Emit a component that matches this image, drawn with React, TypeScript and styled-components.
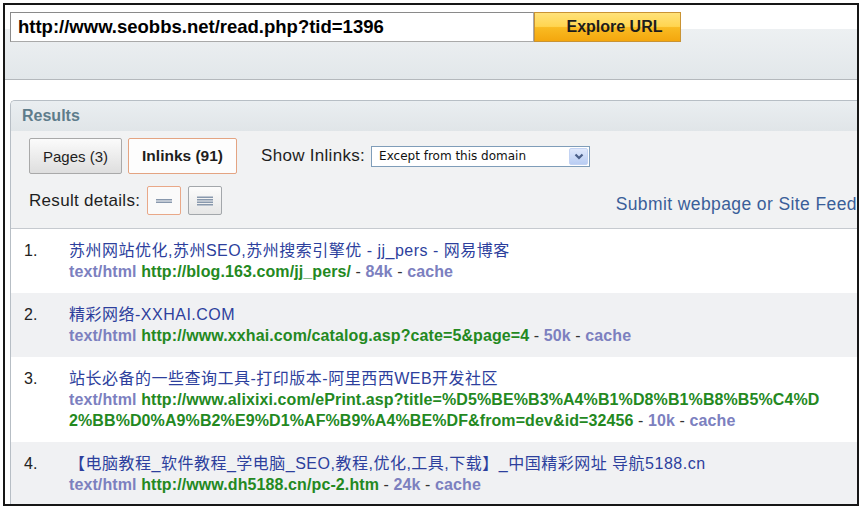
import React from "react"
import styled, { createGlobalStyle } from "styled-components"

const GlobalStyle = createGlobalStyle`
    html, body {
        margin: 0;
        padding: 0;
        background: #fff;
    }
    body {
        font-family: "Liberation Sans", Arial, "Noto Sans CJK SC", sans-serif;
    }
`

interface IResult {
    title: string
    url: string[]
    size: string
}

const results: IResult[] = [
    {
        title: '苏州网站优化,苏州SEO,苏州搜索引擎优 - jj_pers - 网易博客',
        url: ['http://blog.163.com/jj_pers/'],
        size: '84k',
    },
    {
        title: '精彩网络-XXHAI.COM',
        url: ['http://www.xxhai.com/catalog.asp?cate=5&page=4'],
        size: '50k',
    },
    {
        title: '站长必备的一些查询工具-打印版本-阿里西西WEB开发社区',
        url: [
            'http://www.alixixi.com/ePrint.asp?title=%D5%BE%B3%A4%B1%D8%B1%B8%B5%C4%D',
            '2%BB%D0%A9%B2%E9%D1%AF%B9%A4%BE%DF&from=dev&id=32456',
        ],
        size: '10k',
    },
    {
        title: '【电脑教程_软件教程_学电脑_SEO,教程,优化,工具,下载】_中国精彩网址 导航5188.cn',
        url: ['http://www.dh5188.cn/pc-2.htm'],
        size: '24k',
    },
]

const Frame = styled.div`
    margin: 3px;
    width: 856px;
    height: 503px;
    box-sizing: border-box;
    border: 2px solid #161616;
    overflow: hidden;
    background: #fff;
`

const TopBar = styled.div`
    display: flex;
    align-items: flex-start;
    height: 75px;
    padding: 7px 0 0 5px;
    box-sizing: border-box;
    background: linear-gradient(to bottom, #fff 0, #fff 24px, #edf0f2 24px, #e2e7ea 100%);
    border-bottom: 1px solid #b4b8bc;
`

const UrlInput = styled.input`
    width: 524px;
    height: 30px;
    box-sizing: border-box;
    margin: 0;
    padding: 0 0 0 7px;
    border: 1px solid #a9a9a9;
    border-top-color: #8a8a8a;
    border-left-color: #8a8a8a;
    background: #fff;
    color: #000;
    font-family: "Liberation Sans", Arial, sans-serif;
    font-size: 18.5px;
    font-weight: bold;
    outline: none;
`

const ExploreButton = styled.button`
    width: 147px;
    height: 30px;
    margin: 0;
    padding: 0 0 0 14px;
    border: 1px solid #c99334;
    background: linear-gradient(to bottom, #ffe27a 0%, #ffd550 48%, #f9bb22 52%, #f4a70e 100%);
    color: #1c1c1c;
    font-family: "Liberation Sans", Arial, sans-serif;
    font-size: 16px;
    font-weight: bold;
    cursor: pointer;
`

const Panel = styled.div`
    margin: 20px 0 0 5px;
    border: 1px solid #b7bec5;
    border-right: none;
    border-top-left-radius: 5px;
    background: #f1f2f3;
    overflow: hidden;
`

const PanelHeader = styled.div`
    height: 30px;
    display: flex;
    align-items: center;
    padding-left: 11px;
    background: linear-gradient(to bottom, #eaeef1, #e0e5e8);
    color: #5e7c8b;
    font-size: 16px;
    font-weight: bold;
`

const PanelBody = styled.div`
    padding: 7px 0 13px 18px;
    display: flex;
    flex-direction: column;
    gap: 12px;
`

const ControlRow = styled.div`
    display: flex;
    align-items: center;
`

const Tab = styled.button<{ $active?: boolean }>`
    height: 36px;
    margin: 0 6px 0 0;
    padding: 0 13px;
    border: 1px solid ${p => p.$active ? '#e4a482' : '#a9a9a9'};
    border-radius: 2px;
    background: ${p => p.$active ? '#fdfdfd' : 'linear-gradient(to bottom, #fbfbfb, #dedede)'};
    color: #1e1e1e;
    font-family: "Liberation Sans", Arial, sans-serif;
    font-size: ${p => p.$active ? '15.5px' : '15px'};
    font-weight: ${p => p.$active ? 'bold' : 'normal'};
`

const Label = styled.span<{ $gap?: number }>`
    margin-left: ${p => p.$gap ?? 0}px;
    color: #1e1e1e;
    font-size: 17px;
    letter-spacing: 0.3px;
`

const Select = styled.div`
    position: relative;
    width: 219px;
    height: 21px;
    margin-left: 6px;
    box-sizing: border-box;
    border: 1px solid #7f9db9;
    background: #fff;
    display: flex;
    align-items: center;
    padding-left: 7px;
    color: #111;
    font-family: "DejaVu Sans", Verdana, sans-serif;
    font-size: 12px;
`

const SelectArrow = styled.span`
    position: absolute;
    right: 1px;
    top: 1px;
    width: 19px;
    height: 17px;
    border-radius: 2px;
    border: 1px solid #c3d3f3;
    box-sizing: border-box;
    background: linear-gradient(to bottom, #dfe8fb, #b9cdf3);
    display: flex;
    align-items: center;
    justify-content: center;
`

const DetailButton = styled.button<{ $active?: boolean }>`
    width: 34px;
    height: 29px;
    margin: 0 0 0 7px;
    padding: 0;
    display: flex;
    align-items: center;
    justify-content: center;
    border: 1px solid ${p => p.$active ? '#e9a888' : '#a3a7ab'};
    border-radius: 2px;
    background: ${p => p.$active ? '#fafafa' : 'linear-gradient(to bottom, #fcfcfc, #e6e6e6)'};
`

const SubmitLink = styled.a`
    margin-left: auto;
    margin-top: 8px;
    color: #3a5e99;
    font-size: 17.5px;
    letter-spacing: 0.4px;
    white-space: nowrap;
    text-decoration: none;
`

const ResultList = styled.ol`
    margin: 0;
    padding: 0;
    list-style: none;
    border-top: 1px solid #c6cacf;
`

const ResultRow = styled.li<{ $shaded: boolean }>`
    display: grid;
    grid-template-columns: 45px 1fr;
    padding: 11px 0 11px 13px;
    background: ${p => p.$shaded ? '#f0f1f3' : '#fff'};
    font-size: 16px;
    line-height: 21px;
`

const Num = styled.span`
    color: #222;
`

const Title = styled.a`
    display: block;
    color: #2d3f9d;
    text-decoration: none;
    white-space: nowrap;
    letter-spacing: 0.5px;
`

const Meta = styled.div`
    white-space: nowrap;
    font-weight: bold;
    color: #7c80bf;
    letter-spacing: 0.1px;
`

const Url = styled.span`
    color: #24891f;
`

const Dash = styled.span`
    font-weight: normal;
    color: #333;
`

function LinesIcon({ count }: { count: number }) {
    const gap = 2.5
    const top = 6 - ((count - 1) * gap) / 2
    return (
        <svg width="16" height="12" viewBox="0 0 16 12">
            {Array.from({ length: count }).map((_, i) => (
                <line key={i} x1="0" x2="16" y1={top + i * gap} y2={top + i * gap} stroke="#8898ad" strokeWidth="1.3" />
            ))}
        </svg>
    )
}

function App() {
    return (
        <>
            <GlobalStyle />
            <Frame>
                <TopBar>
                    <UrlInput readOnly value="http://www.seobbs.net/read.php?tid=1396" />
                    <ExploreButton>Explore URL</ExploreButton>
                </TopBar>

                <Panel>
                    <PanelHeader>Results</PanelHeader>
                    <PanelBody>
                        <ControlRow>
                            <Tab>Pages (3)</Tab>
                            <Tab $active>Inlinks (91)</Tab>
                            <Label $gap={18}>Show Inlinks:</Label>
                            <Select>
                                Except from this domain
                                <SelectArrow>
                                    <svg width="10" height="7" viewBox="0 0 10 7">
                                        <path d="M1.5 1.5 L5 5 L8.5 1.5" stroke="#4a5f88" strokeWidth="2.2" fill="none" />
                                    </svg>
                                </SelectArrow>
                            </Select>
                        </ControlRow>
                        <ControlRow>
                            <Label>Result details:</Label>
                            <DetailButton $active>
                                <LinesIcon count={2} />
                            </DetailButton>
                            <DetailButton>
                                <LinesIcon count={4} />
                            </DetailButton>
                            <SubmitLink>Submit webpage or Site Feed</SubmitLink>
                        </ControlRow>
                    </PanelBody>

                    <ResultList>
                        {results.map((r, i) => (
                            <ResultRow key={i} $shaded={i % 2 === 1}>
                                <Num>{i + 1}.</Num>
                                <div>
                                    <Title>{r.title}</Title>
                                    <Meta>
                                        text/html{' '}
                                        <Url>
                                            {r.url.map((part, j) => (
                                                <React.Fragment key={j}>
                                                    {j > 0 && <br />}
                                                    {part}
                                                </React.Fragment>
                                            ))}
                                        </Url>
                                        <Dash> - </Dash>
                                        {r.size}
                                        <Dash> - </Dash>
                                        cache
                                    </Meta>
                                </div>
                            </ResultRow>
                        ))}
                    </ResultList>
                </Panel>
            </Frame>
        </>
    )
}

export default App
